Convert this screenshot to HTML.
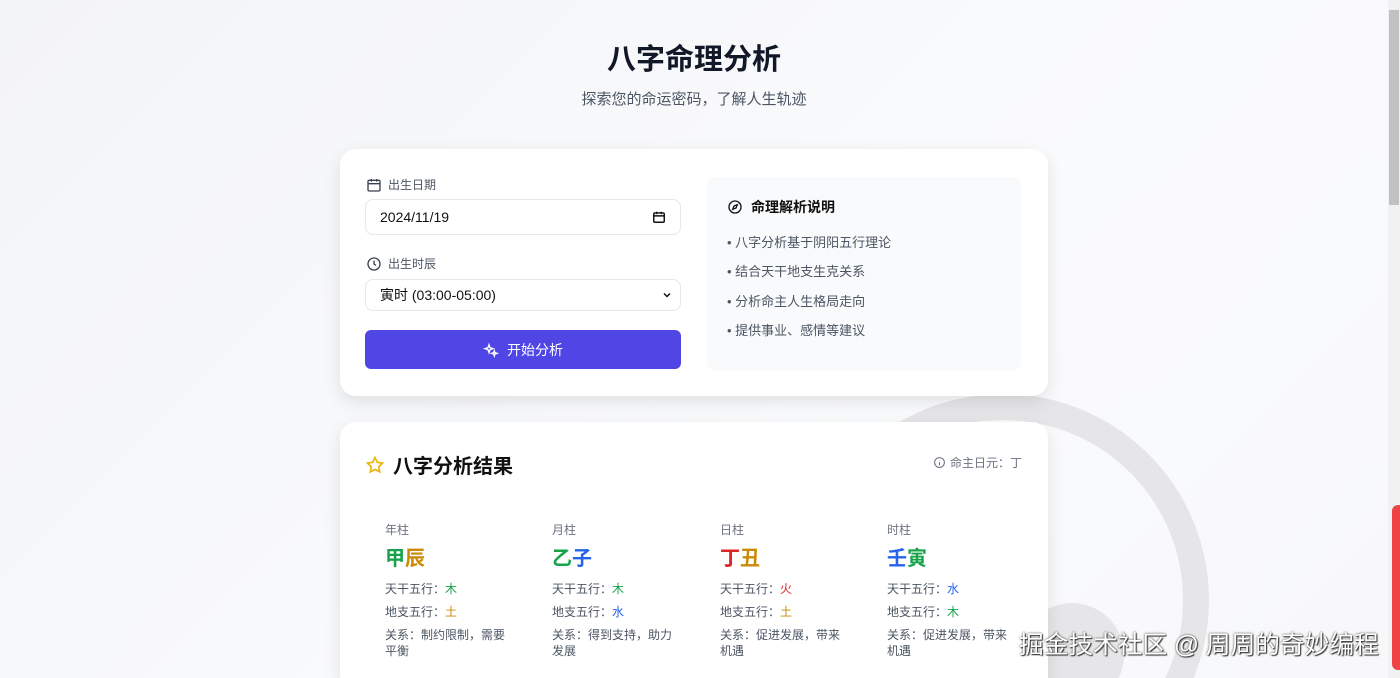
<!DOCTYPE html>
<html><head><meta charset="utf-8"><style>
*{margin:0;padding:0;box-sizing:border-box}
html,body{overflow:hidden}
body{width:1400px;height:678px;overflow:hidden;background:linear-gradient(135deg,#f3f4f7,#fafbfc 60%,#f8f8fa);font-family:"Liberation Sans","Noto Sans CJK SC",sans-serif;position:relative;color:#1f2937}
.abs{position:absolute}
h1{position:absolute;top:36px;left:0;width:1388px;text-align:center;font-size:29px;font-weight:700;color:#111827}
.sub{position:absolute;top:88px;left:0;width:1388px;text-align:center;font-size:15px;color:#4b5563}
.card{position:absolute;left:340px;width:708px;background:#fff;border-radius:16px;box-shadow:0 6px 18px rgba(0,0,0,.1)}
.lbl{position:absolute;font-size:12px;color:#4b5563;display:flex;align-items:center;gap:6px}
.inp{position:absolute;left:25px;width:316px;border:1px solid #e5e7eb;border-radius:8px;font-size:14px;color:#111;display:flex;align-items:center;padding-left:14px}
.btn{position:absolute;left:25px;top:181px;width:316px;height:39px;background:#4f46e5;border-radius:6px;color:#fff;font-size:14px;display:flex;align-items:center;justify-content:center;gap:8px}
.panel{position:absolute;left:367px;top:28px;width:314px;height:193px;background:#f9fafb;border-radius:8px}
.panel li{list-style:none;font-size:13px;color:#4b5563;position:absolute;left:20px}
.col{position:absolute;top:100px;width:122px}
.col .t{font-size:12px;color:#6b7280;line-height:17px}
.col .g{font-size:20px;font-weight:700;margin-top:5px;line-height:30px}
.col .l{font-size:12px;color:#4b5563;margin-top:7px;line-height:16px}
.G{color:#16a34a}.B{color:#2563eb}.R{color:#dc2626}.Y{color:#ca8a04}
</style></head><body>
<svg class="abs" style="left:0;top:0" width="1400" height="678">
<circle cx="1003" cy="600" r="193" fill="none" stroke="#e6e6e8" stroke-width="26"/>
<circle cx="1072" cy="655" r="52" fill="#e6e6e8"/>
</svg>
<h1>八字命理分析</h1>
<div class="sub">探索您的命运密码，了解人生轨迹</div>

<div class="card" style="top:149px;height:247px">
 <div class="lbl" style="left:26px;top:27px"><svg width="16" height="16" viewBox="0 0 24 24" fill="none" stroke="#374151" stroke-width="2"><rect x="3" y="5" width="18" height="16" rx="2"/><path d="M3 10h18M8 3v4M16 3v4"/></svg>出生日期</div>
 <div class="inp" style="top:50px;height:36px">2024/11/19<svg style="position:absolute;right:14px" width="14" height="14" viewBox="0 0 24 24" fill="none" stroke="#111" stroke-width="2.5"><rect x="3" y="5" width="18" height="16" rx="2"/><path d="M3 10h18M8 3v4M16 3v4"/></svg></div>
 <div class="lbl" style="left:26px;top:106px"><svg width="16" height="16" viewBox="0 0 24 24" fill="none" stroke="#374151" stroke-width="2"><circle cx="12" cy="12" r="9"/><path d="M12 7v5l3 2"/></svg>出生时辰</div>
 <div class="inp" style="top:130px;height:32px">寅时 (03:00-05:00)<svg style="position:absolute;right:8px" width="10" height="10" viewBox="0 0 10 10" fill="none" stroke="#111" stroke-width="1.5"><path d="M2 3.5l3 3 3-3"/></svg></div>
 <div class="btn"><svg width="16" height="16" viewBox="0 0 24 24" fill="none" stroke="#fff" stroke-width="2"><path d="M9 4l1.5 4.5L15 10l-4.5 1.5L9 16l-1.5-4.5L3 10l4.5-1.5z"/><path d="M17 13l1 3 3 1-3 1-1 3-1-3-3-1 3-1z"/></svg>开始分析</div>
 <div class="panel">
  <div style="position:absolute;left:20px;top:20px;display:flex;align-items:center;gap:8px;font-size:14px;font-weight:700;color:#111"><svg width="16" height="16" viewBox="0 0 24 24" fill="none" stroke="#111" stroke-width="2"><circle cx="12" cy="12" r="9"/><path d="M15.5 8.5l-2 5-5 2 2-5z"/></svg>命理解析说明</div>
  <li style="top:55px">• 八字分析基于阴阳五行理论</li>
  <li style="top:84px">• 结合天干地支生克关系</li>
  <li style="top:114px">• 分析命主人生格局走向</li>
  <li style="top:143px">• 提供事业、感情等建议</li>
 </div>
</div>

<div class="card" style="top:422px;height:256px;border-radius:16px 16px 0 0">
 <div style="position:absolute;left:25px;top:28px;display:flex;align-items:center;gap:8px;font-size:20px;font-weight:700;color:#111"><svg width="20" height="20" viewBox="0 0 24 24" fill="none" stroke="#eab308" stroke-width="2"><path d="M12 3l2.8 5.8 6.2.9-4.5 4.4 1.1 6.2L12 17.3l-5.6 3 1.1-6.2L3 9.7l6.2-.9z"/></svg>八字分析结果</div>
 <div style="position:absolute;right:26px;top:32px;display:flex;align-items:center;gap:4px;font-size:12px;color:#6b7280"><svg width="13" height="13" viewBox="0 0 24 24" fill="none" stroke="#6b7280" stroke-width="2"><circle cx="12" cy="12" r="9"/><path d="M12 11v6M12 7.5v.5"/></svg>命主日元：丁</div>
 <div class="col" style="left:45px"><div class="t">年柱</div><div class="g"><span class="G">甲</span><span class="Y">辰</span></div><div class="l">天干五行：<span class="G">木</span></div><div class="l">地支五行：<span class="Y">土</span></div><div class="l">关系：制约限制，需要平衡</div></div>
 <div class="col" style="left:212px"><div class="t">月柱</div><div class="g"><span class="G">乙</span><span class="B">子</span></div><div class="l">天干五行：<span class="G">木</span></div><div class="l">地支五行：<span class="B">水</span></div><div class="l">关系：得到支持，助力发展</div></div>
 <div class="col" style="left:380px"><div class="t">日柱</div><div class="g"><span class="R">丁</span><span class="Y">丑</span></div><div class="l">天干五行：<span class="R">火</span></div><div class="l">地支五行：<span class="Y">土</span></div><div class="l">关系：促进发展，带来机遇</div></div>
 <div class="col" style="left:547px"><div class="t">时柱</div><div class="g"><span class="B">壬</span><span class="G">寅</span></div><div class="l">天干五行：<span class="B">水</span></div><div class="l">地支五行：<span class="G">木</span></div><div class="l">关系：促进发展，带来机遇</div></div>
</div>

<div class="abs" style="left:1019px;top:625px;font-size:24.7px;color:#fff;text-shadow:0 0 2px #333,1px 1px 1px #333;white-space:nowrap">掘金技术社区 @ 周周的奇妙编程</div>
<div class="abs" style="left:1388px;top:0;width:12px;height:678px;background:#f1f1f1"></div>
<div class="abs" style="left:1389px;top:10px;width:10px;height:195px;background:#c1c1c1"></div>
<div class="abs" style="left:1392px;top:505px;width:8px;height:165px;background:#ef4444;border-radius:6px 0 0 6px"></div>
</body></html>
